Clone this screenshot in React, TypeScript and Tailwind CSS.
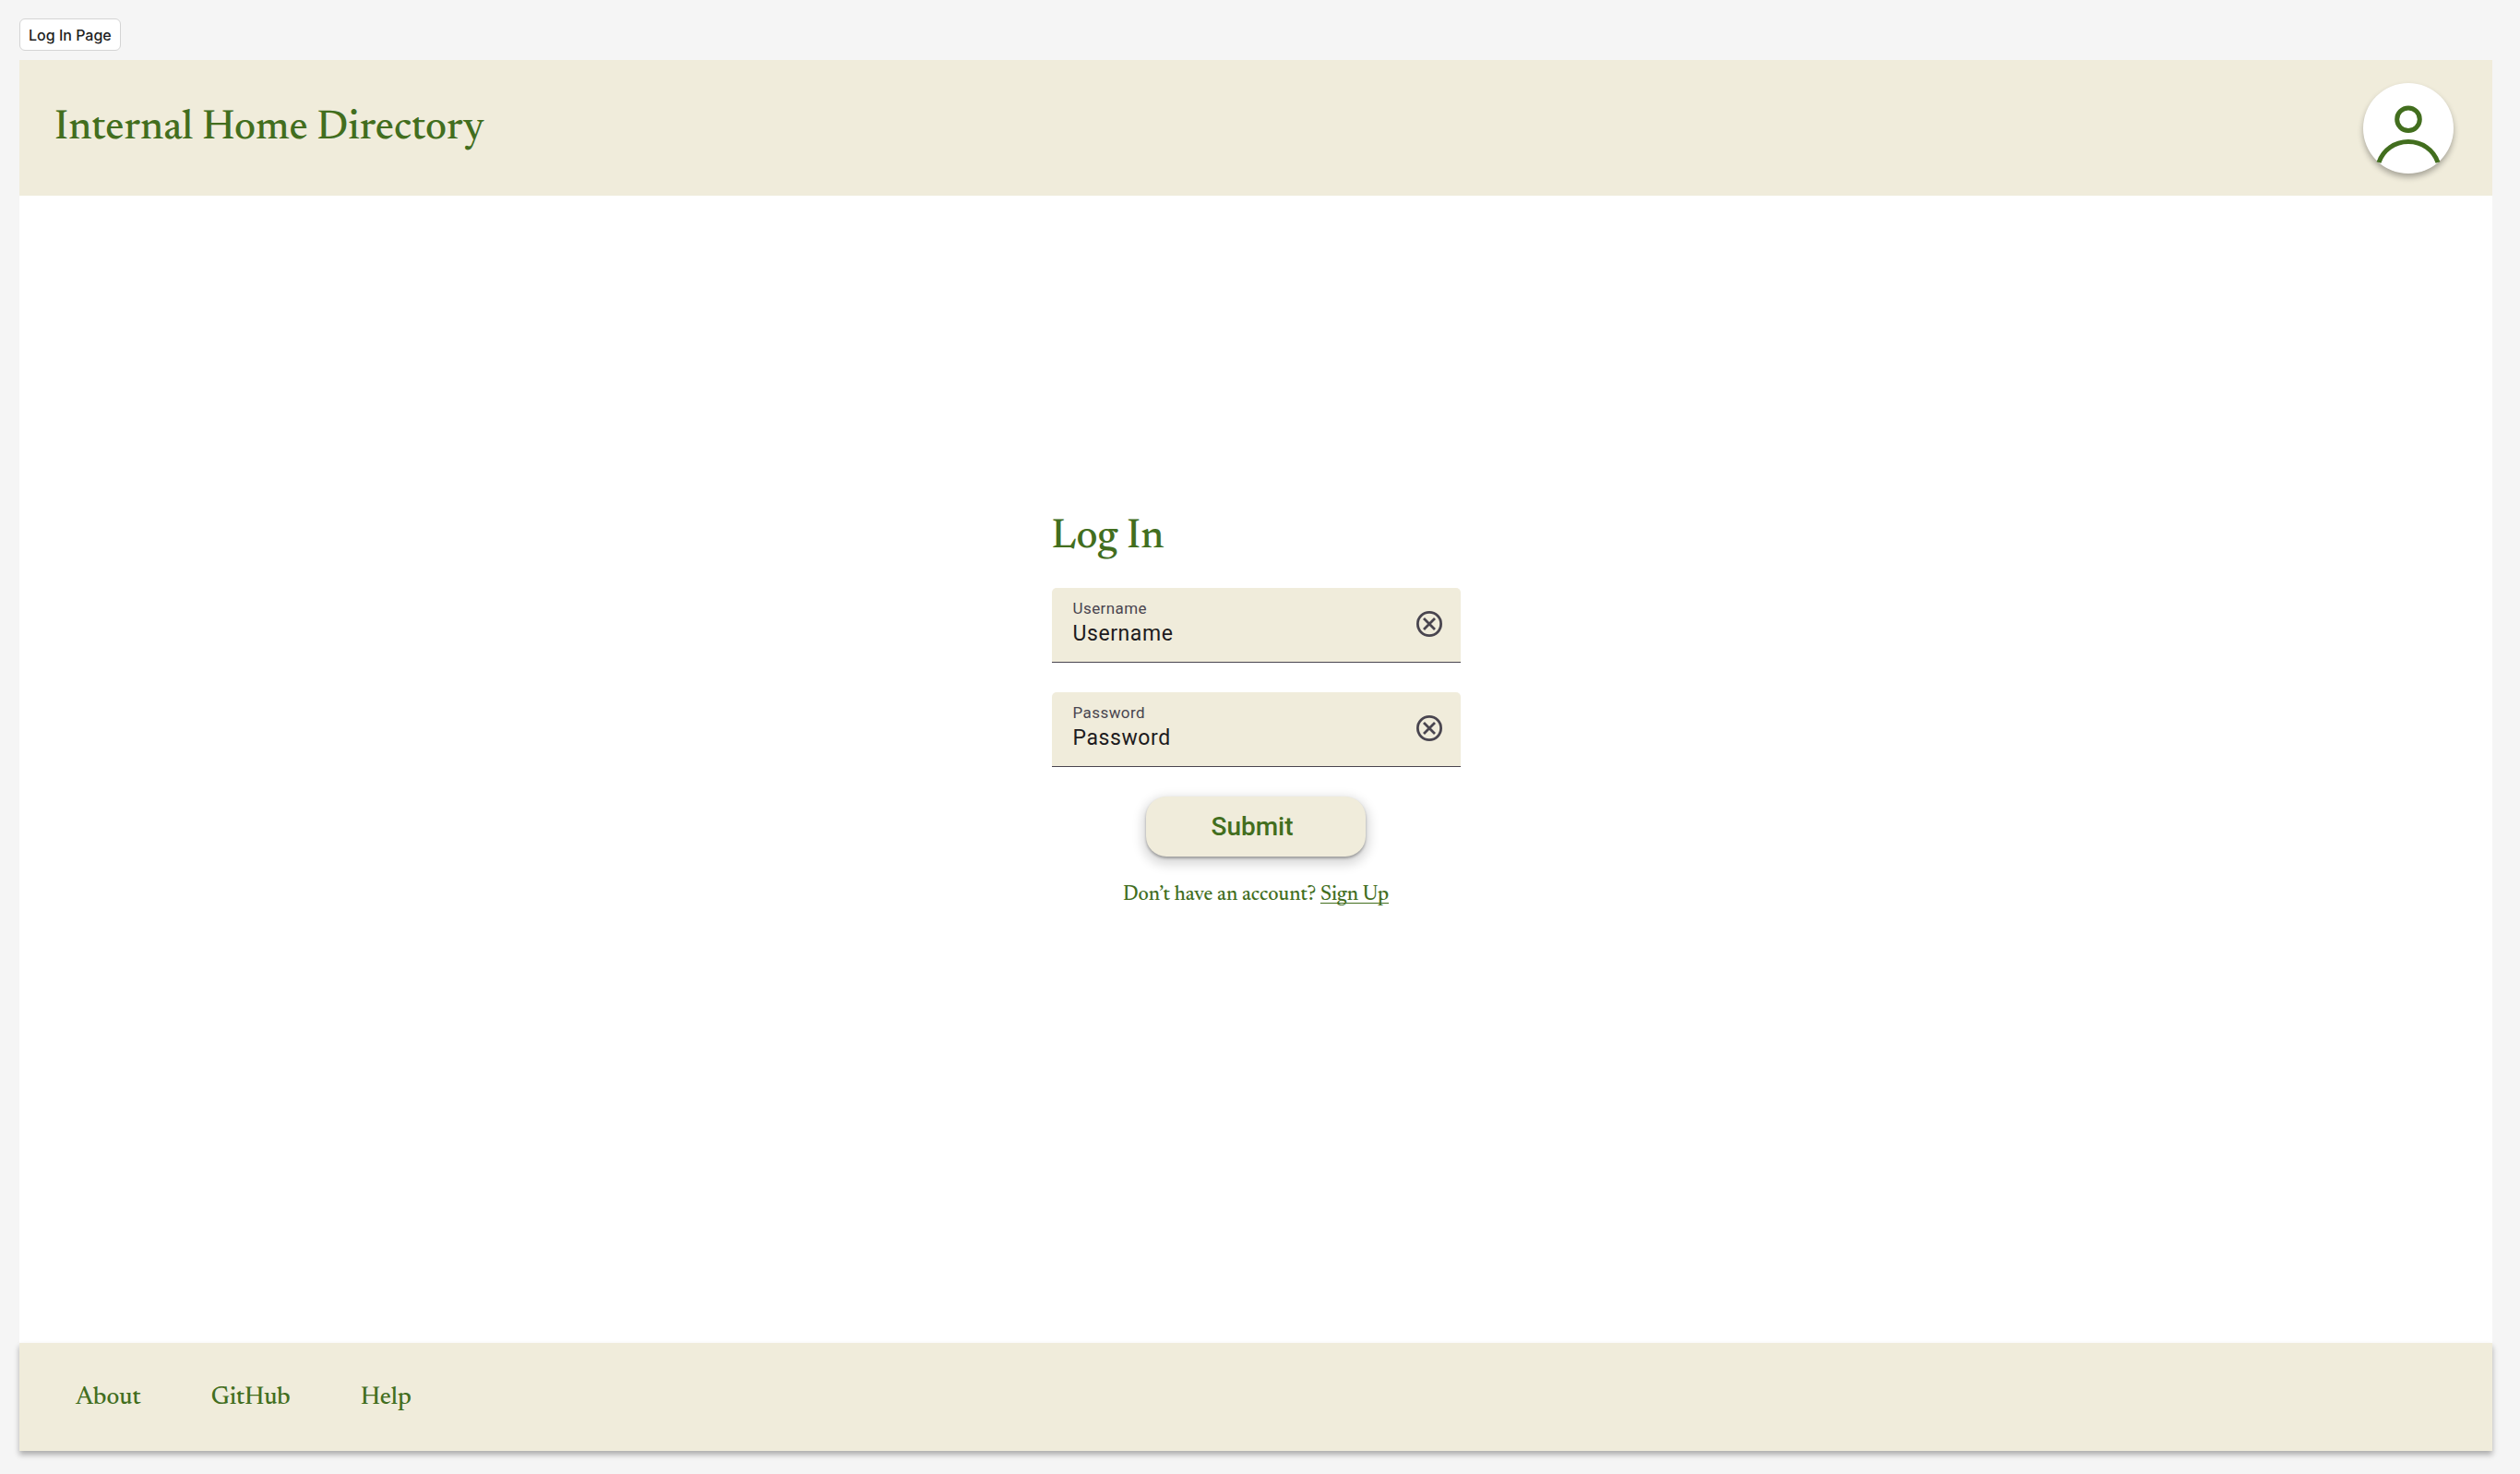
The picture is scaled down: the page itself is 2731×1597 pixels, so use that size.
import React from "react";

const serif = "font-['Newsreader','Liberation_Serif',serif] font-medium";

function ClearIcon() {
  return (
    <svg viewBox="0 0 28 28" className="size-7" fill="none" stroke="currentColor" strokeWidth="2.8" aria-hidden="true">
      <circle cx="14" cy="14" r="12.6" />
      <path d="M8 8 20 20M20 8 8 20" />
    </svg>
  );
}

function Field({ id, label, type }: { id: string; label: string; type: string }) {
  return (
    <div className="flex h-[81px] items-center rounded-t-[5px] border-b border-[#49454f] bg-[#f0ecdb] pr-5 pl-[23px] font-[Roboto,sans-serif] font-normal">
      <div className="flex min-w-0 flex-1 flex-col pb-0.5">
        <label htmlFor={id} className="text-[17px] leading-[22px] tracking-wide text-[#49454f]">
          {label}
        </label>
        <input
          id={id}
          type={type}
          placeholder={label}
          className="h-[34px] w-full bg-transparent text-[23px] leading-[34px] tracking-wide text-[#1d1b20] outline-none placeholder:text-[#1d1b20]"
        />
      </div>
      <button type="button" aria-label={`Clear ${label}`} className="mb-0.5 text-[#49454f]">
        <ClearIcon />
      </button>
    </div>
  );
}

export default function App() {
  return (
    <div className="flex min-h-screen flex-col bg-[#f5f5f5] pt-5 pr-[30px] pb-[25px] pl-[21px] text-[#426e1e]">
      <div className="mb-[10px] flex h-[35px] items-center self-start rounded-[6px] border border-[#d4d4d4] bg-white px-[9px] font-[Inter,sans-serif] text-[16px] font-medium text-[#1e1e1e]">
        Log In Page
      </div>

      <div className={`flex flex-1 flex-col bg-white ${serif}`}>
        <header className="flex h-[147px] items-center justify-between bg-[#f0ecdb] pr-[42px] pl-[38px]">
          <h1 className="pt-0.5 text-[45px] leading-[56px]">Internal Home Directory</h1>
          <button
            type="button"
            aria-label="Account"
            className="size-[98px] rounded-full bg-white shadow-[0_4px_6px_rgba(0,0,0,0.3)]"
          >
            <svg viewBox="0 0 98 98" className="size-full" fill="none" stroke="currentColor" strokeWidth="5" aria-hidden="true">
              <circle cx="49" cy="39.3" r="12.3" />
              <path d="M17 86C21.500 72.500 34 63.500 49 63.500S76.500 72.500 81 86" />
            </svg>
          </button>
        </header>

        <main className="flex flex-1 flex-col items-center justify-center pb-[122px]">
          <form className="flex w-[443px] flex-col gap-8" onSubmit={(e) => e.preventDefault()}>
            <h2 className="text-[45px] leading-[44px]">Log In</h2>
            <Field id="username" label="Username" type="text" />
            <Field id="password" label="Password" type="password" />
            <button
              type="submit"
              className="h-[65px] w-[238px] self-center rounded-[22px] bg-[#f0ecdb] pr-2 font-[Roboto,sans-serif] text-[28px] font-medium shadow-[0_2px_3px_rgba(0,0,0,0.3),0_5px_12px_4px_rgba(0,0,0,0.15)]"
            >
              Submit
            </button>
          </form>
          <p className="mt-7 text-[22px] leading-7">
            Don’t have an account?{" "}
            <a
              href="#sign-up"
              className="underline decoration-1 underline-offset-[3px] [text-decoration-skip-ink:none]"
            >
              Sign Up
            </a>
          </p>
        </main>

        <footer className="h-[117px] bg-[#f0ecdb] px-[61px] pt-11 shadow-[0_4px_6px_rgba(0,0,0,0.3)]">
          <nav className="flex gap-[76px] text-[27px] leading-8">
            <a href="#about">About</a>
            <a href="#github">GitHub</a>
            <a href="#help">Help</a>
          </nav>
        </footer>
      </div>
    </div>
  );
}
